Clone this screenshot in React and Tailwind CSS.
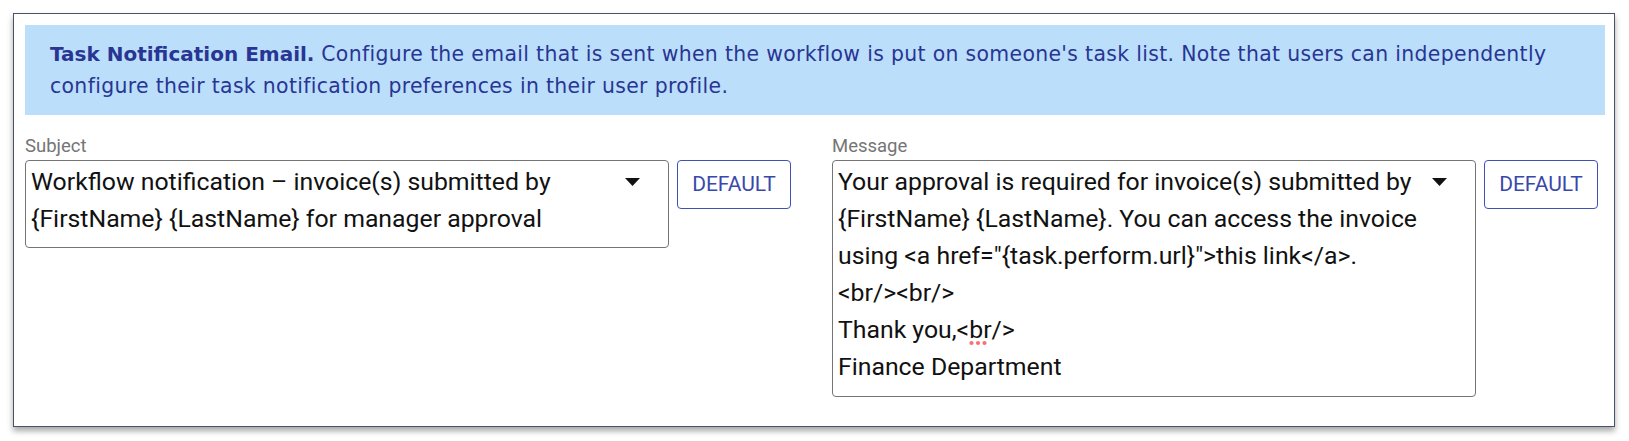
import React from "react";

function Arrow() {
  return (
    <svg width="15" height="8" viewBox="0 0 15 8" className="absolute right-[28px] top-[17px]">
      <path d="M0 0 L15 0 L7.5 8 Z" fill="#111" />
    </svg>
  );
}

function DefaultButton() {
  return (
    <button className="w-[114px] h-[49px] shrink-0 rounded-[4px] border border-[#3f51b5] text-[#3949ab] text-[21px] leading-none bg-white" style={{ fontFamily: "Roboto, sans-serif" }}>
      DEFAULT
    </button>
  );
}

export default function App() {
  return (
    <div className="w-[1629px] h-[441px] bg-white pt-[13px] pl-[13px]">
      <div className="w-[1602px] h-[414px] border border-[#44546a] bg-white shadow-[0_4px_6px_rgba(0,0,0,0.35)] pt-[11px] pl-[11px] pr-[9px]">
        <div className="bg-[#bbdefb] h-[90px] pl-[25px] pr-[20px] pt-[13px] text-[#283593] text-[20.4px] leading-[32px] tracking-[0.34px]" style={{ fontFamily: '"DejaVu Sans", sans-serif' }}>
          <span className="font-bold text-[20px] tracking-normal">Task Notification Email.</span> Configure the email that is sent when the workflow is put on someone's task list. Note that users can independently configure their task notification preferences in their user profile.
        </div>
        <div className="grid grid-cols-[766px_766px] gap-[41px] mt-[18px]" style={{ fontFamily: "Roboto, sans-serif" }}>
          <div>
            <div className="text-[18.5px] leading-[27px] text-[#757575]">Subject</div>
            <div className="flex gap-[8px] items-start">
              <div className="relative w-[644px] h-[88px] border border-[#757575] rounded-[4px] pl-[5px] pr-[45px] pt-[2px] text-[24.8px] leading-[37px] text-[#111]">
                Workflow notification – invoice(s) submitted by {"{FirstName}"} {"{LastName}"} for manager approval
                <Arrow />
              </div>
              <DefaultButton />
            </div>
          </div>
          <div>
            <div className="text-[18.5px] leading-[27px] text-[#757575]">Message</div>
            <div className="flex gap-[8px] items-start">
              <div className="relative w-[644px] h-[237px] border border-[#757575] rounded-[4px] pl-[5px] pr-[45px] pt-[2px] text-[24.8px] leading-[37px] text-[#111]">
                <div>Your approval is required for invoice(s) submitted by {"{FirstName}"} {"{LastName}"}. You can access the invoice using &lt;a href="{"{task.perform.url}"}"&gt;this link&lt;/a&gt;.</div>
                <div>&lt;br/&gt;&lt;br/&gt;</div>
                <div>
                  Thank you,&lt;
                  <span className="relative">
                    br
                    <svg width="18" height="6" viewBox="0 0 18 6" className="absolute left-0 top-[25px]">
                      <circle cx="2.5" cy="3" r="2.1" fill="#f87171" />
                      <circle cx="9" cy="3" r="2.1" fill="#f87171" />
                      <circle cx="15.5" cy="3" r="2.1" fill="#f87171" />
                    </svg>
                  </span>
                  /&gt;
                </div>
                <div>Finance Department</div>
                <Arrow />
              </div>
              <DefaultButton />
            </div>
          </div>
        </div>
      </div>
    </div>
  );
}
